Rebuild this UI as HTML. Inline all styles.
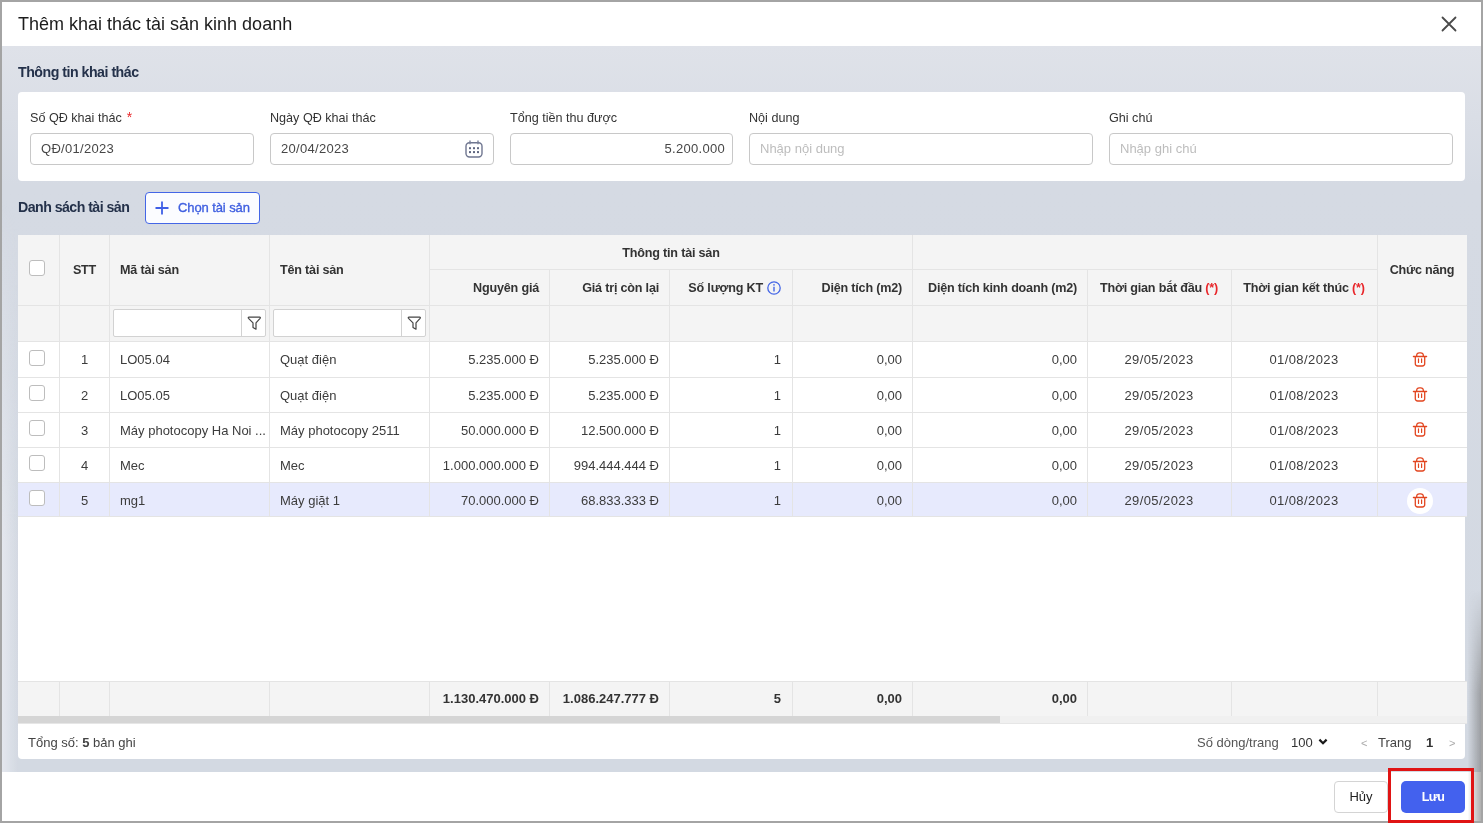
<!DOCTYPE html>
<html><head><meta charset="utf-8"><title>Thêm khai thác tài sản kinh doanh</title>
<style>
*{box-sizing:border-box;margin:0;padding:0}
html,body{width:1483px;height:823px;overflow:hidden;background:#a4a4a4}
body{font-family:"Liberation Sans",sans-serif;position:relative;color:#333}
div,span{position:absolute;white-space:nowrap}
#modal{left:2px;top:2px;width:1479px;height:819px;background:#fff;overflow:hidden;will-change:transform}
.t{font-size:13px;color:#3c3c3c;line-height:16px}
.b{font-weight:bold}
.hd{font-size:12.6px;letter-spacing:-0.2px;font-weight:bold;color:#333;line-height:16px}
.lbl{font-size:12.6px;color:#333;line-height:16px}
.inp{height:32px;border:1px solid #c8c8c8;border-radius:4px;background:#fff}
.it{font-size:13px;letter-spacing:0.3px;color:#474747;line-height:16px}
.ph{color:#bdbdbd;letter-spacing:0}
.vl{width:1px;background:#e4e4e4}
.hl{height:1px;background:#e4e4e4}
.cb{width:16px;height:16px;border:1px solid #bdbdbd;border-radius:3px;background:#fff}
</style></head>
<body>
<div id="modal">
<div style="left:0px;top:0px;width:1479px;height:44px;background:#fff"></div>
<span class="t" style="left:16px;top:12px;font-size:18px;color:#1c1c1c;line-height:20px">Thêm khai thác tài sản kinh doanh</span>
<svg style="position:absolute;left:1439px;top:14px" width="16" height="16" viewBox="0 0 16 16"><path d="M1.5 1.5L14.5 14.5M14.5 1.5L1.5 14.5" stroke="#4a4a4a" stroke-width="1.8" stroke-linecap="round"/></svg>
<div style="left:0px;top:44px;width:1479px;height:726px;background:linear-gradient(180deg,#dfe2e9 0px,#d5dae3 140px,#d3d9e2 726px)"></div>
<div style="left:0px;top:198px;width:16px;height:572px;background:linear-gradient(90deg,rgba(234,236,242,0.75) 0%,rgba(234,236,242,0) 100%);-webkit-mask-image:linear-gradient(180deg,transparent 0%,#000 60%)"></div>
<div style="left:0px;top:770px;width:1479px;height:49px;background:#fff"></div>
<span class="t b" style="left:16px;top:62px;font-size:14.2px;color:#24314a;letter-spacing:-0.5px">Thông tin khai thác</span>
<div style="left:16px;top:90px;width:1447px;height:89px;background:#fff;border-radius:4px"></div>
<span class="lbl" style="left:28px;top:108px;">Số QĐ khai thác<span style="position:static;color:#e8262a;font-size:14px;line-height:10px;margin-left:5px">*</span></span>
<span class="lbl" style="left:268px;top:108px;">Ngày QĐ khai thác</span>
<span class="lbl" style="left:508px;top:108px;">Tổng tiền thu được</span>
<span class="lbl" style="left:747px;top:108px;">Nội dung</span>
<span class="lbl" style="left:1107px;top:108px;">Ghi chú</span>
<div class="inp" style="left:28px;top:131px;width:224px;height:32px;"></div>
<div class="inp" style="left:268px;top:131px;width:224px;height:32px;"></div>
<div class="inp" style="left:508px;top:131px;width:223px;height:32px;"></div>
<div class="inp" style="left:747px;top:131px;width:344px;height:32px;"></div>
<div class="inp" style="left:1107px;top:131px;width:344px;height:32px;"></div>
<span class="it" style="left:39px;top:139px;">QĐ/01/2023</span>
<span class="it" style="left:279px;top:139px;">20/04/2023</span>
<span class="it" style="right:756px;top:139px;">5.200.000</span>
<span class="it ph" style="left:758px;top:139px;">Nhập nội dung</span>
<span class="it ph" style="left:1118px;top:139px;">Nhập ghi chú</span>
<svg style="position:absolute;left:463px;top:138px" width="18" height="18" viewBox="0 0 18 18"><rect x="1" y="2.8" width="16" height="14.2" rx="3.5" fill="none" stroke="#6f7690" stroke-width="1.4"/><path d="M5 0.5V4.2M13 0.5V4.2" stroke="#7a8199" stroke-width="1.4"/><rect x="4" y="7.199999999999999" width="2" height="2" fill="#5f6680"/><rect x="4" y="11.1" width="2" height="2" fill="#5f6680"/><rect x="8" y="7.199999999999999" width="2" height="2" fill="#5f6680"/><rect x="8" y="11.1" width="2" height="2" fill="#5f6680"/><rect x="12" y="7.199999999999999" width="2" height="2" fill="#5f6680"/><rect x="12" y="11.1" width="2" height="2" fill="#5f6680"/></svg>
<span class="t b" style="left:16px;top:197px;font-size:14.2px;color:#24314a;letter-spacing:-0.55px">Danh sách tài sản</span>
<div style="left:143px;top:190px;width:115px;height:32px;background:#fbfcff;border:1px solid #4466e6;border-radius:4px"></div>
<svg style="position:absolute;left:153px;top:199px" width="14" height="14" viewBox="0 0 14 14"><path d="M7 0.5V13.5M0.5 7H13.5" stroke="#3f5fe6" stroke-width="1.8"/></svg>
<span class="t" style="left:176px;top:198px;color:#3f5fe0;font-size:13px;letter-spacing:-0.1px;-webkit-text-stroke:0.35px #3f5fe0">Chọn tài sản</span>
<div style="left:16px;top:233px;width:1447px;height:488px;background:#fff"></div>
<div style="left:16px;top:340px;width:1449px;height:175px;background:#fff"></div>
<div style="left:16px;top:233px;width:1449px;height:106px;background:#f4f4f4"></div>
<div class="vl" style="left:57px;top:233px;width:1px;height:106px;"></div>
<div class="vl" style="left:107px;top:233px;width:1px;height:106px;"></div>
<div class="vl" style="left:267px;top:233px;width:1px;height:106px;"></div>
<div class="vl" style="left:427px;top:233px;width:1px;height:106px;"></div>
<div class="vl" style="left:910px;top:233px;width:1px;height:106px;"></div>
<div class="vl" style="left:1375px;top:233px;width:1px;height:106px;"></div>
<div class="vl" style="left:547px;top:267px;width:1px;height:72px;"></div>
<div class="vl" style="left:667px;top:267px;width:1px;height:72px;"></div>
<div class="vl" style="left:790px;top:267px;width:1px;height:72px;"></div>
<div class="vl" style="left:1085px;top:267px;width:1px;height:72px;"></div>
<div class="vl" style="left:1229px;top:267px;width:1px;height:72px;"></div>
<div class="hl" style="left:427px;top:267px;width:948px;height:1px;"></div>
<div class="hl" style="left:16px;top:303px;width:1449px;height:1px;"></div>
<div class="hl" style="left:16px;top:339px;width:1449px;height:1px;"></div>
<div class="cb" style="left:27px;top:258px;width:16px;height:16px;"></div>
<span class="hd" style="left:-117.5px;width:400px;text-align:center;top:260px;">STT</span>
<span class="hd" style="left:118px;top:260px;">Mã tài sản</span>
<span class="hd" style="left:278px;top:260px;">Tên tài sản</span>
<span class="hd" style="left:469px;width:400px;text-align:center;top:243px;">Thông tin tài sản</span>
<span class="hd" style="right:942px;top:278px;">Nguyên giá</span>
<span class="hd" style="right:822px;top:278px;">Giá trị còn lại</span>
<span class="hd" style="right:718px;top:278px;">Số lượng KT</span>
<svg style="position:absolute;left:765px;top:279px" width="14" height="14" viewBox="0 0 14 14"><circle cx="7" cy="7" r="6.2" fill="none" stroke="#4466e6" stroke-width="1.3"/><path d="M7 5.8V10.6" stroke="#4466e6" stroke-width="1.4"/><circle cx="7" cy="3.9" r="0.8" fill="#4466e6"/></svg>
<span class="hd" style="right:579px;top:278px;">Diện tích (m2)</span>
<span class="hd" style="right:404px;top:278px;">Diện tích kinh doanh (m2)</span>
<span class="hd" style="left:957px;width:400px;text-align:center;top:278px;">Thời gian bắt đầu <span style="position:static;color:#e8262a">(*)</span></span>
<span class="hd" style="left:1102px;width:400px;text-align:center;top:278px;">Thời gian kết thúc <span style="position:static;color:#e8262a">(*)</span></span>
<span class="hd" style="left:1220px;width:400px;text-align:center;top:260px;">Chức năng</span>
<div style="left:111px;top:307px;width:153px;height:28px;background:#fff;border:1px solid #d2d2d2;border-radius:2px"></div>
<div style="left:239px;top:307px;width:1px;height:28px;background:#d2d2d2"></div>
<svg style="position:absolute;left:245px;top:314px" width="14" height="14" viewBox="0 0 14 14"><path d="M2 1.2H12.6Q13.8 1.2 13.1 2.3L9 6.9V13.2L6 11.4V6.9L1.5 2.3Q0.8 1.2 2 1.2Z" fill="none" stroke="#444" stroke-width="1.2" stroke-linejoin="round"/></svg>
<div style="left:271px;top:307px;width:153px;height:28px;background:#fff;border:1px solid #d2d2d2;border-radius:2px"></div>
<div style="left:399px;top:307px;width:1px;height:28px;background:#d2d2d2"></div>
<svg style="position:absolute;left:405px;top:314px" width="14" height="14" viewBox="0 0 14 14"><path d="M2 1.2H12.6Q13.8 1.2 13.1 2.3L9 6.9V13.2L6 11.4V6.9L1.5 2.3Q0.8 1.2 2 1.2Z" fill="none" stroke="#444" stroke-width="1.2" stroke-linejoin="round"/></svg>
<div class="vl" style="left:57px;top:340px;width:1px;height:35px;"></div>
<div class="vl" style="left:107px;top:340px;width:1px;height:35px;"></div>
<div class="vl" style="left:267px;top:340px;width:1px;height:35px;"></div>
<div class="vl" style="left:427px;top:340px;width:1px;height:35px;"></div>
<div class="vl" style="left:547px;top:340px;width:1px;height:35px;"></div>
<div class="vl" style="left:667px;top:340px;width:1px;height:35px;"></div>
<div class="vl" style="left:790px;top:340px;width:1px;height:35px;"></div>
<div class="vl" style="left:910px;top:340px;width:1px;height:35px;"></div>
<div class="vl" style="left:1085px;top:340px;width:1px;height:35px;"></div>
<div class="vl" style="left:1229px;top:340px;width:1px;height:35px;"></div>
<div class="vl" style="left:1375px;top:340px;width:1px;height:35px;"></div>
<div class="hl" style="left:16px;top:375px;width:1449px;height:1px;"></div>
<div class="cb" style="left:27px;top:348px;width:16px;height:16px;"></div>
<span class="t" style="left:-117.5px;width:400px;text-align:center;top:350px;">1</span>
<span class="t" style="left:118px;top:350px;">LO05.04</span>
<span class="t" style="left:278px;top:350px;">Quạt điện</span>
<span class="t" style="right:942px;top:350px;">5.235.000 Đ</span>
<span class="t" style="right:822px;top:350px;">5.235.000 Đ</span>
<span class="t" style="right:700px;top:350px;">1</span>
<span class="t" style="right:579px;top:350px;">0,00</span>
<span class="t" style="right:404px;top:350px;">0,00</span>
<span class="t" style="left:957px;width:400px;text-align:center;top:350px;letter-spacing:0.4px">29/05/2023</span>
<span class="t" style="left:1102px;width:400px;text-align:center;top:350px;letter-spacing:0.4px">01/08/2023</span>
<svg style="position:absolute;left:1410px;top:349px" width="16" height="16" viewBox="0 0 16 16" fill="none" stroke="#e2451f"><path d="M1.4 5.5H14.6" stroke-width="1.3" stroke-linecap="round"/><path d="M4.7 5.5V4.3A2.5 2.5 0 0 1 7.2 1.8H8.8A2.5 2.5 0 0 1 11.3 4.3V5.5" stroke-width="1.3"/><path d="M3.3 5.6V12.7A2.3 2.3 0 0 0 5.6 15H10.4A2.3 2.3 0 0 0 12.7 12.7V5.6" stroke-width="1.3"/><path d="M6.5 7.8V11.4M9.6 7.8V11.4" stroke-width="1.2" stroke-linecap="round"/></svg>
<div class="vl" style="left:57px;top:375px;width:1px;height:35px;"></div>
<div class="vl" style="left:107px;top:375px;width:1px;height:35px;"></div>
<div class="vl" style="left:267px;top:375px;width:1px;height:35px;"></div>
<div class="vl" style="left:427px;top:375px;width:1px;height:35px;"></div>
<div class="vl" style="left:547px;top:375px;width:1px;height:35px;"></div>
<div class="vl" style="left:667px;top:375px;width:1px;height:35px;"></div>
<div class="vl" style="left:790px;top:375px;width:1px;height:35px;"></div>
<div class="vl" style="left:910px;top:375px;width:1px;height:35px;"></div>
<div class="vl" style="left:1085px;top:375px;width:1px;height:35px;"></div>
<div class="vl" style="left:1229px;top:375px;width:1px;height:35px;"></div>
<div class="vl" style="left:1375px;top:375px;width:1px;height:35px;"></div>
<div class="hl" style="left:16px;top:410px;width:1449px;height:1px;"></div>
<div class="cb" style="left:27px;top:383px;width:16px;height:16px;"></div>
<span class="t" style="left:-117.5px;width:400px;text-align:center;top:386px;">2</span>
<span class="t" style="left:118px;top:386px;">LO05.05</span>
<span class="t" style="left:278px;top:386px;">Quạt điện</span>
<span class="t" style="right:942px;top:386px;">5.235.000 Đ</span>
<span class="t" style="right:822px;top:386px;">5.235.000 Đ</span>
<span class="t" style="right:700px;top:386px;">1</span>
<span class="t" style="right:579px;top:386px;">0,00</span>
<span class="t" style="right:404px;top:386px;">0,00</span>
<span class="t" style="left:957px;width:400px;text-align:center;top:386px;letter-spacing:0.4px">29/05/2023</span>
<span class="t" style="left:1102px;width:400px;text-align:center;top:386px;letter-spacing:0.4px">01/08/2023</span>
<svg style="position:absolute;left:1410px;top:384px" width="16" height="16" viewBox="0 0 16 16" fill="none" stroke="#e2451f"><path d="M1.4 5.5H14.6" stroke-width="1.3" stroke-linecap="round"/><path d="M4.7 5.5V4.3A2.5 2.5 0 0 1 7.2 1.8H8.8A2.5 2.5 0 0 1 11.3 4.3V5.5" stroke-width="1.3"/><path d="M3.3 5.6V12.7A2.3 2.3 0 0 0 5.6 15H10.4A2.3 2.3 0 0 0 12.7 12.7V5.6" stroke-width="1.3"/><path d="M6.5 7.8V11.4M9.6 7.8V11.4" stroke-width="1.2" stroke-linecap="round"/></svg>
<div class="vl" style="left:57px;top:410px;width:1px;height:35px;"></div>
<div class="vl" style="left:107px;top:410px;width:1px;height:35px;"></div>
<div class="vl" style="left:267px;top:410px;width:1px;height:35px;"></div>
<div class="vl" style="left:427px;top:410px;width:1px;height:35px;"></div>
<div class="vl" style="left:547px;top:410px;width:1px;height:35px;"></div>
<div class="vl" style="left:667px;top:410px;width:1px;height:35px;"></div>
<div class="vl" style="left:790px;top:410px;width:1px;height:35px;"></div>
<div class="vl" style="left:910px;top:410px;width:1px;height:35px;"></div>
<div class="vl" style="left:1085px;top:410px;width:1px;height:35px;"></div>
<div class="vl" style="left:1229px;top:410px;width:1px;height:35px;"></div>
<div class="vl" style="left:1375px;top:410px;width:1px;height:35px;"></div>
<div class="hl" style="left:16px;top:445px;width:1449px;height:1px;"></div>
<div class="cb" style="left:27px;top:418px;width:16px;height:16px;"></div>
<span class="t" style="left:-117.5px;width:400px;text-align:center;top:421px;">3</span>
<span class="t" style="left:118px;top:421px;">Máy photocopy Ha Noi ...</span>
<span class="t" style="left:278px;top:421px;">Máy photocopy 2511</span>
<span class="t" style="right:942px;top:421px;">50.000.000 Đ</span>
<span class="t" style="right:822px;top:421px;">12.500.000 Đ</span>
<span class="t" style="right:700px;top:421px;">1</span>
<span class="t" style="right:579px;top:421px;">0,00</span>
<span class="t" style="right:404px;top:421px;">0,00</span>
<span class="t" style="left:957px;width:400px;text-align:center;top:421px;letter-spacing:0.4px">29/05/2023</span>
<span class="t" style="left:1102px;width:400px;text-align:center;top:421px;letter-spacing:0.4px">01/08/2023</span>
<svg style="position:absolute;left:1410px;top:419px" width="16" height="16" viewBox="0 0 16 16" fill="none" stroke="#e2451f"><path d="M1.4 5.5H14.6" stroke-width="1.3" stroke-linecap="round"/><path d="M4.7 5.5V4.3A2.5 2.5 0 0 1 7.2 1.8H8.8A2.5 2.5 0 0 1 11.3 4.3V5.5" stroke-width="1.3"/><path d="M3.3 5.6V12.7A2.3 2.3 0 0 0 5.6 15H10.4A2.3 2.3 0 0 0 12.7 12.7V5.6" stroke-width="1.3"/><path d="M6.5 7.8V11.4M9.6 7.8V11.4" stroke-width="1.2" stroke-linecap="round"/></svg>
<div class="vl" style="left:57px;top:445px;width:1px;height:35px;"></div>
<div class="vl" style="left:107px;top:445px;width:1px;height:35px;"></div>
<div class="vl" style="left:267px;top:445px;width:1px;height:35px;"></div>
<div class="vl" style="left:427px;top:445px;width:1px;height:35px;"></div>
<div class="vl" style="left:547px;top:445px;width:1px;height:35px;"></div>
<div class="vl" style="left:667px;top:445px;width:1px;height:35px;"></div>
<div class="vl" style="left:790px;top:445px;width:1px;height:35px;"></div>
<div class="vl" style="left:910px;top:445px;width:1px;height:35px;"></div>
<div class="vl" style="left:1085px;top:445px;width:1px;height:35px;"></div>
<div class="vl" style="left:1229px;top:445px;width:1px;height:35px;"></div>
<div class="vl" style="left:1375px;top:445px;width:1px;height:35px;"></div>
<div class="hl" style="left:16px;top:480px;width:1449px;height:1px;"></div>
<div class="cb" style="left:27px;top:453px;width:16px;height:16px;"></div>
<span class="t" style="left:-117.5px;width:400px;text-align:center;top:456px;">4</span>
<span class="t" style="left:118px;top:456px;">Mec</span>
<span class="t" style="left:278px;top:456px;">Mec</span>
<span class="t" style="right:942px;top:456px;">1.000.000.000 Đ</span>
<span class="t" style="right:822px;top:456px;">994.444.444 Đ</span>
<span class="t" style="right:700px;top:456px;">1</span>
<span class="t" style="right:579px;top:456px;">0,00</span>
<span class="t" style="right:404px;top:456px;">0,00</span>
<span class="t" style="left:957px;width:400px;text-align:center;top:456px;letter-spacing:0.4px">29/05/2023</span>
<span class="t" style="left:1102px;width:400px;text-align:center;top:456px;letter-spacing:0.4px">01/08/2023</span>
<svg style="position:absolute;left:1410px;top:454px" width="16" height="16" viewBox="0 0 16 16" fill="none" stroke="#e2451f"><path d="M1.4 5.5H14.6" stroke-width="1.3" stroke-linecap="round"/><path d="M4.7 5.5V4.3A2.5 2.5 0 0 1 7.2 1.8H8.8A2.5 2.5 0 0 1 11.3 4.3V5.5" stroke-width="1.3"/><path d="M3.3 5.6V12.7A2.3 2.3 0 0 0 5.6 15H10.4A2.3 2.3 0 0 0 12.7 12.7V5.6" stroke-width="1.3"/><path d="M6.5 7.8V11.4M9.6 7.8V11.4" stroke-width="1.2" stroke-linecap="round"/></svg>
<div style="left:16px;top:481px;width:1449px;height:33px;background:#e7eafd"></div>
<div class="vl" style="left:57px;top:480px;width:1px;height:35px;"></div>
<div class="vl" style="left:107px;top:480px;width:1px;height:35px;"></div>
<div class="vl" style="left:267px;top:480px;width:1px;height:35px;"></div>
<div class="vl" style="left:427px;top:480px;width:1px;height:35px;"></div>
<div class="vl" style="left:547px;top:480px;width:1px;height:35px;"></div>
<div class="vl" style="left:667px;top:480px;width:1px;height:35px;"></div>
<div class="vl" style="left:790px;top:480px;width:1px;height:35px;"></div>
<div class="vl" style="left:910px;top:480px;width:1px;height:35px;"></div>
<div class="vl" style="left:1085px;top:480px;width:1px;height:35px;"></div>
<div class="vl" style="left:1229px;top:480px;width:1px;height:35px;"></div>
<div class="vl" style="left:1375px;top:480px;width:1px;height:35px;"></div>
<div class="hl" style="left:16px;top:514px;width:1449px;height:1px;"></div>
<div class="cb" style="left:27px;top:488px;width:16px;height:16px;"></div>
<span class="t" style="left:-117.5px;width:400px;text-align:center;top:491px;">5</span>
<span class="t" style="left:118px;top:491px;">mg1</span>
<span class="t" style="left:278px;top:491px;">Máy giặt 1</span>
<span class="t" style="right:942px;top:491px;">70.000.000 Đ</span>
<span class="t" style="right:822px;top:491px;">68.833.333 Đ</span>
<span class="t" style="right:700px;top:491px;">1</span>
<span class="t" style="right:579px;top:491px;">0,00</span>
<span class="t" style="right:404px;top:491px;">0,00</span>
<span class="t" style="left:957px;width:400px;text-align:center;top:491px;letter-spacing:0.4px">29/05/2023</span>
<span class="t" style="left:1102px;width:400px;text-align:center;top:491px;letter-spacing:0.4px">01/08/2023</span>
<div style="left:1405px;top:486px;width:26px;height:26px;background:#fff;border-radius:50%"></div>
<svg style="position:absolute;left:1410px;top:490px" width="16" height="16" viewBox="0 0 16 16" fill="none" stroke="#e2451f"><path d="M1.4 5.5H14.6" stroke-width="1.3" stroke-linecap="round"/><path d="M4.7 5.5V4.3A2.5 2.5 0 0 1 7.2 1.8H8.8A2.5 2.5 0 0 1 11.3 4.3V5.5" stroke-width="1.3"/><path d="M3.3 5.6V12.7A2.3 2.3 0 0 0 5.6 15H10.4A2.3 2.3 0 0 0 12.7 12.7V5.6" stroke-width="1.3"/><path d="M6.5 7.8V11.4M9.6 7.8V11.4" stroke-width="1.2" stroke-linecap="round"/></svg>
<div style="left:16px;top:679px;width:1449px;height:35px;background:#f4f4f4"></div>
<div class="hl" style="left:16px;top:679px;width:1449px;height:1px;"></div>
<div class="vl" style="left:57px;top:679px;width:1px;height:35px;"></div>
<div class="vl" style="left:107px;top:679px;width:1px;height:35px;"></div>
<div class="vl" style="left:267px;top:679px;width:1px;height:35px;"></div>
<div class="vl" style="left:427px;top:679px;width:1px;height:35px;"></div>
<div class="vl" style="left:547px;top:679px;width:1px;height:35px;"></div>
<div class="vl" style="left:667px;top:679px;width:1px;height:35px;"></div>
<div class="vl" style="left:790px;top:679px;width:1px;height:35px;"></div>
<div class="vl" style="left:910px;top:679px;width:1px;height:35px;"></div>
<div class="vl" style="left:1085px;top:679px;width:1px;height:35px;"></div>
<div class="vl" style="left:1229px;top:679px;width:1px;height:35px;"></div>
<div class="vl" style="left:1375px;top:679px;width:1px;height:35px;"></div>
<span class="t b" style="right:942px;top:689px;color:#333">1.130.470.000 Đ</span>
<span class="t b" style="right:822px;top:689px;color:#333">1.086.247.777 Đ</span>
<span class="t b" style="right:700px;top:689px;color:#333">5</span>
<span class="t b" style="right:579px;top:689px;color:#333">0,00</span>
<span class="t b" style="right:404px;top:689px;color:#333">0,00</span>
<div style="left:16px;top:714px;width:1449px;height:7px;background:#f0f0f0"></div>
<div style="left:16px;top:714px;width:982px;height:7px;background:#d5d5d5"></div>
<div style="left:16px;top:721px;width:1449px;height:1px;background:#e6e6e6"></div>
<div style="left:16px;top:722px;width:1447px;height:35px;background:#fff;border-radius:0 0 4px 4px"></div>
<span class="t" style="left:26px;top:733px;color:#444">Tổng số: <b>5</b> bản ghi</span>
<span class="t" style="left:1195px;top:733px;color:#555">Số dòng/trang</span>
<span class="t" style="left:1289px;top:733px;color:#333">100</span>
<svg style="position:absolute;left:1316px;top:736px" width="10" height="8" viewBox="0 0 10 8"><path d="M1.4 1.6L5 5.2L8.6 1.6" fill="none" stroke="#1a1a1a" stroke-width="2.2"/></svg>
<span class="t" style="left:1359px;top:733px;color:#aaa;font-size:11px">&lt;</span>
<span class="t" style="left:1376px;top:733px;color:#444">Trang</span>
<span class="t b" style="left:1424px;top:733px;color:#333">1</span>
<span class="t" style="left:1447px;top:733px;color:#aaa;font-size:11px">&gt;</span>
<div style="left:1332px;top:779px;width:54px;height:32px;background:#fff;border:1px solid #d4d4d4;border-radius:4px"></div>
<span class="t" style="left:1159px;width:400px;text-align:center;top:787px;color:#222">Hủy</span>
<div style="left:1399px;top:779px;width:64px;height:32px;background:#4361ee;border-radius:5px"></div>
<span class="t b" style="left:1231px;width:400px;text-align:center;top:787px;color:#fff;font-size:12.5px;letter-spacing:-0.6px">Lưu</span>
</div>
<div style="left:1463px;top:590px;width:18px;height:231px;background:linear-gradient(90deg,rgba(110,110,110,0) 0%,rgba(110,110,110,0) 25%,rgba(110,110,110,0.55) 100%);-webkit-mask-image:linear-gradient(180deg,transparent 0%,#000 45%,#000 100%)"></div>
<div style="left:1388px;top:768px;width:86px;height:55px;border:3px solid #e01414"></div>
</body></html>
